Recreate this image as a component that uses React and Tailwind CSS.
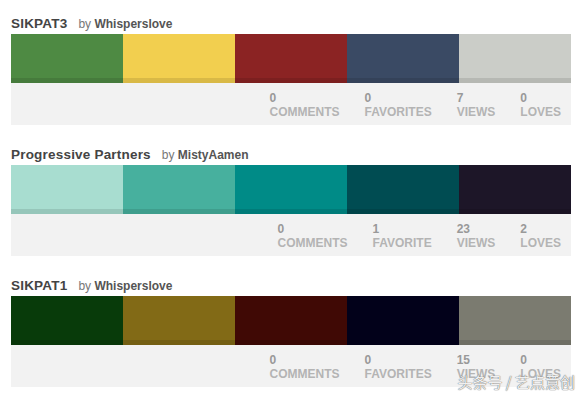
import React from 'react';

const palettes = [
  {
    name: 'SIKPAT3',
    author: 'Whisperslove',
    colors: ['#4e8a43', '#f2cf4f', '#8b2323', '#3a4a64', '#cbcdc8'],
    stats: [
      { n: 0, label: 'Comments' },
      { n: 0, label: 'Favorites' },
      { n: 7, label: 'Views' },
      { n: 0, label: 'Loves' },
    ],
  },
  {
    name: 'Progressive Partners',
    author: 'MistyAamen',
    colors: ['#a8ddd0', '#47b09e', '#008b87', '#004c52', '#1d1628'],
    stats: [
      { n: 0, label: 'Comments' },
      { n: 1, label: 'Favorite' },
      { n: 23, label: 'Views' },
      { n: 2, label: 'Loves' },
    ],
  },
  {
    name: 'SIKPAT1',
    author: 'Whisperslove',
    colors: ['#083b0a', '#826a16', '#400905', '#02011a', '#7b7b70'],
    stats: [
      { n: 0, label: 'Comments' },
      { n: 0, label: 'Favorites' },
      { n: 15, label: 'Views' },
      { n: 0, label: 'Loves' },
    ],
  },
];

const PaletteCard = ({ palette }) => (
  <div className="mb-[20px]">
    {/* Title */}
    <div className="h-[20px] flex items-start gap-[11px] leading-[16px] pt-[2px]">
      <span className="text-[13.5px] font-bold text-[#444] tracking-[0.2px]">{palette.name}</span>
      <span className="text-[12px] text-[#777]">
        by <span className="font-bold text-[#555]">{palette.author}</span>
      </span>
    </div>

    {/* Swatches */}
    <div className="flex h-[49px]">
      {palette.colors.map((c) => (
        <div key={c} className="flex-1 flex flex-col" style={{ backgroundColor: c }}>
          <div className="flex-1"></div>
          <div className="h-[5px] bg-black/10"></div>
        </div>
      ))}
    </div>

    {/* Stats */}
    <div className="h-[42px] bg-[#f2f2f2] flex justify-end gap-[25px] pr-[10px] pt-[8px]">
      {palette.stats.map((s) => (
        <div key={s.label} className="flex flex-col text-[12px] font-bold leading-[14px] uppercase">
          <span className="text-[#999]">{s.n}</span>
          <span className="text-[#b4b4b4]">{s.label}</span>
        </div>
      ))}
    </div>
  </div>
);

const App = () => {
  return (
    <div
      className="relative w-[582px] h-[397px] bg-white overflow-hidden pl-[11px] pt-[14px]"
      style={{ fontFamily: '"Liberation Sans", Arial, sans-serif' }}
    >
      <div className="w-[560px]">
        {palettes.map((p) => (
          <PaletteCard key={p.name} palette={p} />
        ))}
      </div>

      {/* Watermark */}
      <div
        className="absolute right-[7px] top-[373px] text-[15px] leading-[18px] text-white/90 whitespace-nowrap"
        style={{
          fontFamily: '"Noto Sans CJK SC", sans-serif',
          textShadow: '0 0 1px #666, 0 0 1px #666',
        }}
      >
        头条号 / 艺点意创
      </div>
    </div>
  );
};

export default App;
